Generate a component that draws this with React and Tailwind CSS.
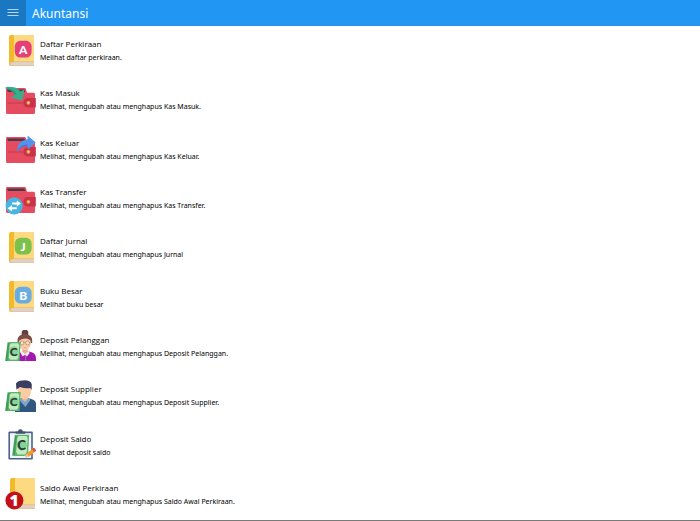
import React from 'react'

function Book({ badge, letter, x = 0 }) {
  return (
    <g transform={`translate(${x} 0)`}>
      <path d="M6 0H29V31H6.5Q4 31 4 28.5V2.5Q4 0 6 0Z" fill="#fdd982" />
      <path d="M6 0H9V27H6.5Q4.8 27 4 28.5V2.5Q4 0 6 0Z" fill="#f2b92b" />
      <path d="M4 28.8Q4.4 26.6 7 26.6H29V27.6H7Q5.4 27.8 5.4 29Q5.4 30.3 7 30.3H29V31H6.5Q4 31 4 28.8Z" fill="#e5b653" />
      <path d="M7 27.2H29V30.4H7Q5.6 30.2 5.6 28.9Q5.6 27.4 7 27.2Z" fill="#ddd0d2" />
      {letter && (
        <>
          <rect x="9.8" y="5.8" width="16.8" height="16.8" rx="5.5" fill={badge} />
          <text x="18.2" y="18.6" textAnchor="middle" fill="#fff" className="font-['Lato'] text-[12px] font-black">
            {letter}
          </text>
        </>
      )}
    </g>
  )
}

function Wallet({ children }) {
  return (
    <>
      <path d="M1 5.4Q1 4 2.4 4H19.5Q20.8 4 21 5.2L22 8.7H28.6Q30 8.7 30 10.2V28.5Q30 30 28.5 30H2.5Q1 30 1 28.5Z" fill="#e64c60" />
      <path d="M2.4 5.6H19.4L20.2 8H3.6Q2.4 8 2.4 6.8Z" fill="#4e3848" />
      <path d="M2.6 19H18" stroke="#b6384b" strokeWidth="0.8" />
      <path d="M22.5 14H30.8V23.6H22.5Q18.4 23 18.4 18.8Q18.4 14.6 22.5 14Z" fill="#c93249" />
      <circle cx="23.4" cy="18.8" r="1.9" fill="#f3a64c" />
      <circle cx="23.4" cy="18.8" r="0.8" fill="#ffe39a" />
      {children}
    </>
  )
}

function Money() {
  return (
    <g>
      <path d="M2.6 12.2L13.6 13.4L10.6 31H0.2Z" fill="#3f9c5a" />
      <path d="M4.4 12H15.6L14.6 31H2.4Z" fill="#58b56d" />
      <path d="M6 13.2H13.2L14.2 15L13.4 27.6L12 29.8H5.2L3.8 27.6L4.8 15Z" fill="#c5ebbd" />
      <ellipse cx="9" cy="21.4" rx="4.6" ry="5" fill="#8bd296" />
      <text x="8.8" y="25.8" textAnchor="middle" fill="#23403a" className="font-['Lato'] text-[12px] font-black">
        C
      </text>
    </g>
  )
}

function AccountsIcon() {
  return <Book badge="#e83e76" letter="A" />
}

function CashInIcon() {
  return (
    <Wallet>
      <path d="M0 4Q2 2 5 3Q11.5 2.4 15.4 7.4L19.4 5.4L17.2 16.8L5.8 13.2L10 10.8Q7.4 6 0 4Z" fill="#36b08c" />
      <path d="M0 4Q7.4 6 10 10.8L11.4 10Q8.5 4.6 0 4Z" fill="#27967a" />
    </Wallet>
  )
}

function CashOutIcon() {
  return (
    <Wallet>
      <path d="M12.3 19Q11.4 8.2 22.6 6.2V2.4L30.8 9.4L22.6 16.8V12.8Q15.8 12.8 12.3 19Z" fill="#5592ed" />
      <path d="M12.3 19Q14 11.8 22.6 11.6V12.8Q15.8 12.8 12.3 19Z" fill="#4377cf" />
    </Wallet>
  )
}

function TransferIcon() {
  return (
    <Wallet>
      <circle cx="9.2" cy="22.8" r="8.6" fill="#48b4e0" />
      <path d="M7 19.6H11.8V17.4L16 20.6L11.8 23.6V21.6H7Z" fill="#fff" />
      <path d="M11.8 24.2H7V22.2L2.6 25.2L7 28.4V26.2H11.8Z" fill="#fff" />
    </Wallet>
  )
}

function JournalIcon() {
  return <Book badge="#7cc14c" letter="J" />
}

function LedgerIcon() {
  return <Book badge="#69ace0" letter="B" />
}

function CustomerIcon() {
  return (
    <>
      <circle cx="20" cy="3" r="3.4" fill="#66413d" />
      <path d="M12.4 13Q11.4 4.4 19.8 4Q28.4 4.4 27.2 13Z" fill="#7b4d46" />
      <path d="M14 31V24.5Q15 22.2 18 21.6H23.4Q31 22.4 31 28V31Z" fill="#a119ad" />
      <path d="M17.4 17.4H22.6V22L20 26L17 22Z" fill="#e9b08c" />
      <path d="M16.6 21L20 24L23.6 21L24.6 23L22 26.4L20 24.6L17.6 26.4L15.6 23Z" fill="#f0edf4" />
      <path d="M13.8 11Q15.8 8.6 20 8.4Q24.4 8.6 25.8 11V14Q25.2 19.6 19.8 20.2Q14.6 19.6 13.8 14Z" fill="#f8cba6" />
      <path d="M14 12.4H25.6" stroke="#8f6755" strokeWidth="0.4" />
      <circle cx="17" cy="13" r="1.9" fill="#fbe3ca" stroke="#8f6755" strokeWidth="0.5" />
      <circle cx="22.6" cy="13" r="1.9" fill="#fbe3ca" stroke="#8f6755" strokeWidth="0.5" />
      <path d="M18.8 17.6H21" stroke="#cf8e79" strokeWidth="0.5" />
      <path d="M20.6 26.6V31" stroke="#e9c7ef" strokeWidth="0.8" strokeDasharray="1 1" />
      <Money />
    </>
  )
}

function SupplierIcon() {
  return (
    <>
      <path d="M10 32V21.8Q11 19.8 14 19.2L17 18H23L27.6 19.4Q31 20.4 31 24V32Z" fill="#31567f" />
      <path d="M16.6 15H23.2V19.6L20.4 24L16.6 19.6Z" fill="#edb58d" />
      <path d="M15.6 18L20 22L24 18L25.4 20L20.4 27L14.6 20.4Z" fill="#76a6cf" />
      <path d="M13 7H26V12Q25.4 18 19.6 19Q13.8 18 13 12Z" fill="#fbcba4" />
      <path d="M11.4 9.6L11 3.6Q13 0.2 18 0.4Q25.8 0 26.8 4.4L26.6 10L25.2 8Q20 8.8 15 7L13 8.4Z" fill="#383e60" />
      <Money />
    </>
  )
}

function BalanceIcon() {
  return (
    <>
      <rect x="3.4" y="2.4" width="24.4" height="28" rx="1.2" fill="#4d618c" />
      <rect x="5" y="4.2" width="21.2" height="24.8" fill="#f3f5f9" />
      <g transform="translate(7 -7.4) scale(1.1)">
        <Money />
      </g>
      <path d="M10.6 4.8V2.4H13Q13 0.2 15.4 0.2Q17.8 0.2 17.8 2.4H20.2V4.8Z" fill="#435174" />
      <path d="M20.4 28.6L21.8 24.6L28.6 18.8L31 21.8L24.2 27.6Z" fill="#f29b2d" />
      <path d="M27 20.2L28.6 18.8Q30.2 18.8 31 21.8L29.4 23.2Z" fill="#df4e44" />
      <path d="M20.4 28.6L21.8 24.6L24.2 27.6Z" fill="#efc79c" />
    </>
  )
}

function OpeningBalanceIcon() {
  return (
    <>
      <Book x={1} />
      <circle cx="9.4" cy="22.4" r="9" fill="#c40f18" />
      <text x="9.2" y="28" textAnchor="middle" fill="#fff" className="font-['Open_Sans'] text-[16px] font-extrabold">
        1
      </text>
    </>
  )
}

const menuItems = [
  { title: 'Daftar Perkiraan', desc: 'Melihat daftar perkiraan.', Icon: AccountsIcon },
  { title: 'Kas Masuk', desc: 'Melihat, mengubah atau menghapus Kas Masuk.', Icon: CashInIcon },
  { title: 'Kas Keluar', desc: 'Melihat, mengubah atau menghapus Kas Keluar.', Icon: CashOutIcon },
  { title: 'Kas Transfer', desc: 'Melihat, mengubah atau menghapus Kas Transfer.', Icon: TransferIcon },
  { title: 'Daftar Jurnal', desc: 'Melihat, mengubah atau menghapus Jurnal', Icon: JournalIcon },
  { title: 'Buku Besar', desc: 'Melihat buku besar', Icon: LedgerIcon },
  { title: 'Deposit Pelanggan', desc: 'Melihat, mengubah atau menghapus Deposit Pelanggan.', Icon: CustomerIcon },
  { title: 'Deposit Supplier', desc: 'Melihat, mengubah atau menghapus Deposit Supplier.', Icon: SupplierIcon },
  { title: 'Deposit Saldo', desc: 'Melihat deposit saldo', Icon: BalanceIcon },
  { title: 'Saldo Awal Perkiraan', desc: 'Melihat, mengubah atau menghapus Saldo Awal Perkiraan.', Icon: OpeningBalanceIcon },
]

function App() {
  return (
    <div className="min-h-screen flex flex-col bg-white text-black border-b border-[#7a7a78] font-['Noto_Sans','Open_Sans',sans-serif]">
      <header className="flex items-center bg-[#2196f3] text-white">
        <button type="button" aria-label="Menu" className="flex items-center justify-center w-[26px] h-[26px] bg-[#1a78c2]">
          <svg viewBox="0 0 12 8" className="w-3 h-2" stroke="#b5d5ef" strokeWidth="1">
            <path d="M0.5 0.5H11.5M0.5 3.5H11.5M0.5 6.5H11.5" />
          </svg>
        </button>
        <h1 className="pl-[6px] pt-[2px] text-[12px] leading-4">Akuntansi</h1>
      </header>

      <ul className="flex-1 flex flex-col pb-px">
        {menuItems.map(({ title, desc, Icon }) => (
          <li key={title} className="flex-1 flex">
            <a href="#" className="flex-1 flex items-center gap-[3px] pl-[5px]">
              <svg viewBox="0 0 32 32" className="w-8 h-8 shrink-0" aria-hidden="true">
                <Icon />
              </svg>
              <div className="pt-px">
                <h2 className="font-['Open_Sans','Noto_Sans',sans-serif] text-[8px] leading-[14px]">{title}</h2>
                <p className="text-[7px] leading-[14px]">{desc}</p>
              </div>
            </a>
          </li>
        ))}
      </ul>
    </div>
  )
}

export default App
